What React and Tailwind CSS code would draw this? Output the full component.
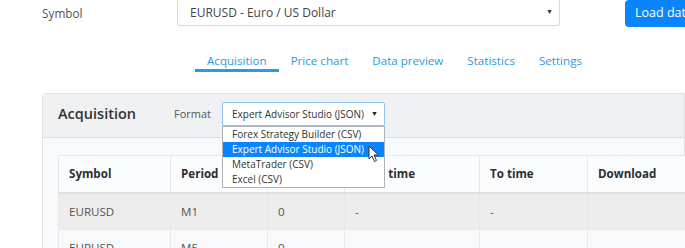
const formats = [
  "Forex Strategy Builder (CSV)",
  "Expert Advisor Studio (JSON)",
  "MetaTrader (CSV)",
  "Excel (CSV)",
];

const tabs = ["Acquisition", "Price chart", "Data preview", "Statistics", "Settings"];

const columns = [
  { label: "Symbol", w: "w-[112px]" },
  { label: "Period", w: "w-[97px]" },
  { label: "Bars", w: "w-[77px]" },
  { label: "From time", w: "w-[135px]" },
  { label: "To time", w: "w-[108px]" },
  { label: "Download", w: "w-[200px]" },
];

const rows = [
  ["EURUSD", "M1", "0", "-", "-", ""],
  ["EURUSD", "M5", "0", "-", "-", ""],
];

const App = () => {
  return (
    <div className="w-[685px] h-[248px] overflow-hidden bg-white font-['Open_Sans',sans-serif] text-[#555]">
      {/* Symbol row */}
      <div className="flex items-start h-[27px]">
        <div className="w-[177px] shrink-0 pl-[42px] pt-[5px] text-[11.8px]">Symbol</div>
        <div className="w-[383px] shrink-0 h-[26px] border border-[#d6d9dc] border-t-0 rounded-b-[3px] flex items-center justify-between pl-[12px] pr-[6px] text-[12px] text-[#444]">
          <span>EURUSD - Euro / US Dollar</span>
          <span className="text-[7px] text-[#333]">▼</span>
        </div>
        <button className="ml-[65px] w-[90px] h-[27px] shrink-0 bg-[#0a84ff] text-white text-[12.5px] pl-[10px] text-left rounded-bl-[4px] rounded-tl-[4px] whitespace-nowrap">
          Load data
        </button>
      </div>

      {/* Tabs */}
      <div className="flex pl-[195px] mt-[25px] h-[20px]">
        {tabs.map((t, i) => (
          <div
            key={t}
            className={
              i === 0
                ? "px-3 text-[11.6px] text-[#2a9be0] border-b-[3px] border-[#2a9be0] leading-[17px]"
                : "px-3 text-[11.6px] text-[#2a9be0] leading-[17px]"
            }
          >
            {t}
          </div>
        ))}
      </div>

      {/* Card */}
      <div className="ml-[42px] mt-[21px] border border-[#dfe2e5] rounded-tl-[4px] bg-[#f8f9fa]">
        <div className="relative h-[44px] bg-[#f0f1f3] border-b border-[#dcdfe3] flex items-center pl-[15px] pb-[3px]">
          <h3 className="text-[14.5px] font-semibold text-[#333] w-[116px] shrink-0">Acquisition</h3>
          <span className="text-[11px] text-[#555] w-[48px] shrink-0">Format</span>
          <div className="relative">
            <div className="w-[163px] h-[24px] bg-white border border-[#8cc4f2] rounded-[2px] flex items-center justify-between pl-[9px] pr-[6px] text-[10px] text-[#333] whitespace-nowrap">
              <span>Expert Advisor Studio (JSON)</span>
              <span className="text-[7px] text-[#222]">▼</span>
            </div>
            <ul className="absolute left-0 top-[24px] w-[163px] bg-white border border-[#a9b4bf] z-10 text-[10px] text-[#333] whitespace-nowrap">
              {formats.map((f, i) => (
                <li
                  key={f}
                  className={
                    i === 1
                      ? "h-[15px] leading-[15px] pl-[9px] bg-[#0a84ff] text-white"
                      : "h-[15px] leading-[15px] pl-[9px]"
                  }
                >
                  {f}
                </li>
              ))}
            </ul>
            {/* cursor */}
            <svg
              className="absolute left-[146px] top-[43px] z-20"
              width="12"
              height="18"
              viewBox="0 0 12 18"
            >
              <path
                d="M1 1 L1 14 L4 11 L6.5 16.5 L8.5 15.5 L6 10 L10.5 10 Z"
                fill="#fff"
                stroke="#333"
                strokeWidth="1"
                strokeLinejoin="round"
              />
            </svg>
          </div>
        </div>

        <div className="pt-[17px] pl-[15px]">
          <table className="border-collapse text-[11.6px] table-fixed w-[729px]">
            <thead>
              <tr className="bg-[#fbfcfd] h-[37px]">
                {columns.map((c) => (
                  <th
                    key={c.label}
                    className={`${c.w} text-left font-bold text-[#2b2f33] pl-[10px] border border-[#e6e8eb] border-b-2 border-b-[#dee1e4]`}
                  >
                    {c.label}
                  </th>
                ))}
              </tr>
            </thead>
            <tbody>
              {rows.map((r, ri) => (
                <tr key={ri} className={ri === 0 ? "bg-[#ededee] h-[37px]" : "bg-[#f8f9fa] h-[37px]"}>
                  {r.map((cell, ci) => (
                    <td key={ci} className="pl-[10px] border border-[#e6e8eb] text-[#555]">
                      {cell}
                    </td>
                  ))}
                </tr>
              ))}
            </tbody>
          </table>
        </div>
      </div>
    </div>
  );
};

export default App;
